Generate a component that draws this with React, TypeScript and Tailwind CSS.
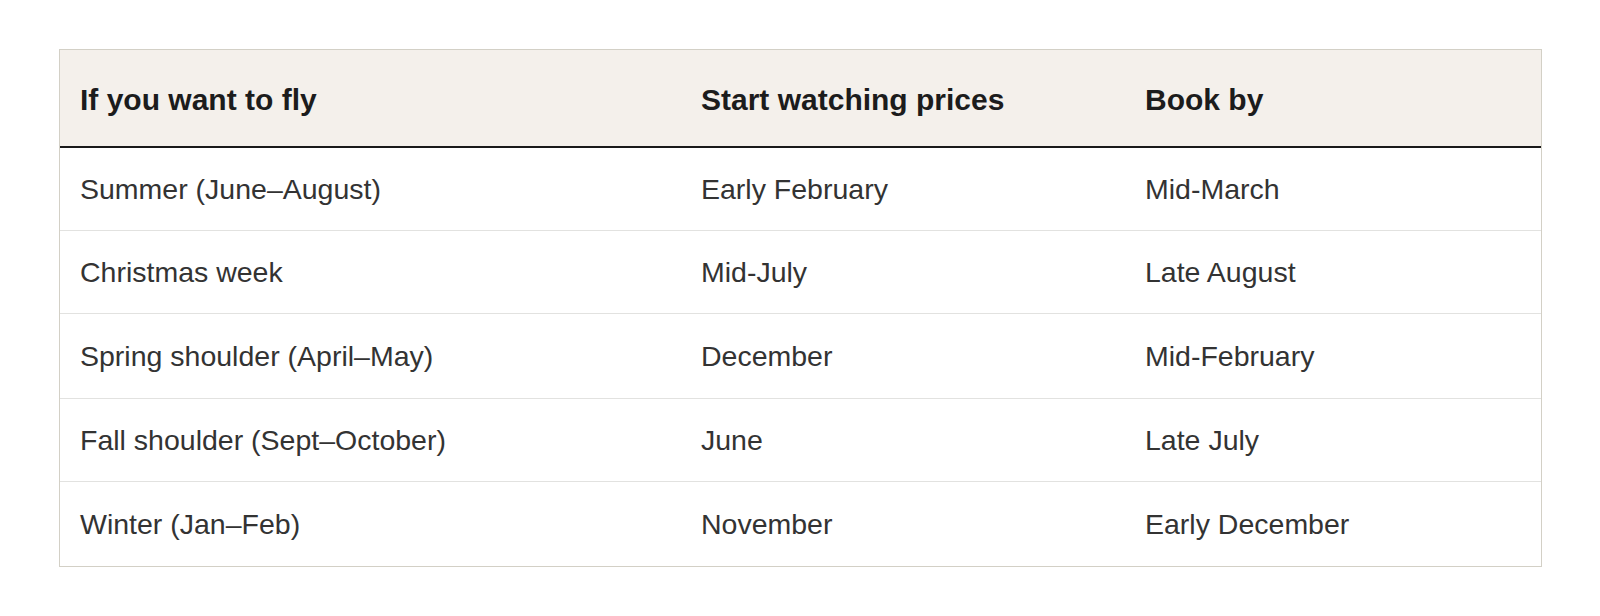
import React from "react";

const rows: { cells: string[]; h: string; last?: boolean }[] = [
  { cells: ["Summer (June–August)", "Early February", "Mid-March"], h: "h-[83px]" },
  { cells: ["Christmas week", "Mid-July", "Late August"], h: "h-[83px]" },
  { cells: ["Spring shoulder (April–May)", "December", "Mid-February"], h: "h-[85px]" },
  { cells: ["Fall shoulder (Sept–October)", "June", "Late July"], h: "h-[83px]" },
  { cells: ["Winter (Jan–Feb)", "November", "Early December"], h: "h-[84px]", last: true },
];

export default function App() {
  return (
    <div
      className="w-[1600px] h-[616px] bg-white pt-[49px] pl-[59px]"
      style={{ fontFamily: '"Liberation Sans", Arial, sans-serif' }}
    >
      <div className="w-[1483px] border border-[#d3d0c6]">
        <div className="grid grid-cols-[621px_444px_1fr] h-[98px] bg-[#f4f0eb] border-b-2 border-[#1a1a1a] items-center text-[30px] font-bold text-[#1c1c1c]">
          <div className="pl-[20px] pt-[2px]">If you want to fly</div>
          <div className="pl-[20px] pt-[2px]">Start watching prices</div>
          <div className="pl-[20px] pt-[2px]">Book by</div>
        </div>
        {rows.map((r, i) => (
          <div
            key={i}
            className={`grid grid-cols-[621px_444px_1fr] ${r.h} items-center text-[28.5px] text-[#333333] ${
              r.last ? "" : "border-b border-[#e2e2e0]"
            }`}
          >
            <div className="pl-[20px]">{r.cells[0]}</div>
            <div className="pl-[20px]">{r.cells[1]}</div>
            <div className="pl-[20px]">{r.cells[2]}</div>
          </div>
        ))}
      </div>
    </div>
  );
}
